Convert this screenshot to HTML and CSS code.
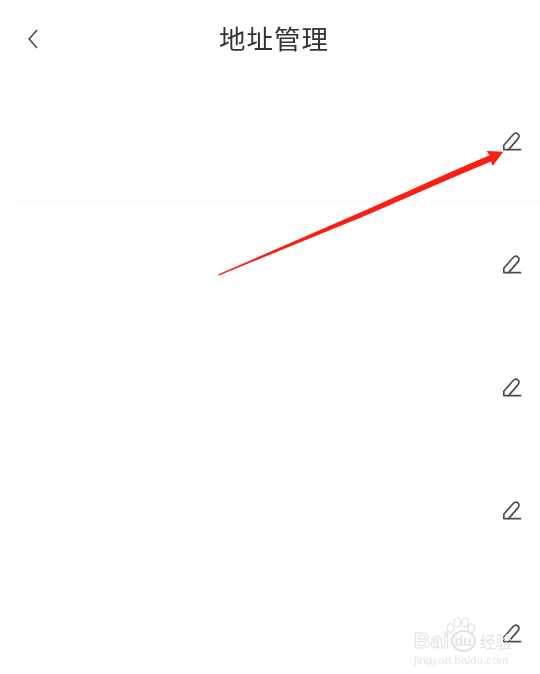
FILE: index.html
```html
<!DOCTYPE html>
<html lang="zh">
<head>
<meta charset="utf-8">
<title>地址管理</title>
<link rel="stylesheet" href="styles.css">
</head>
<body>
<svg class="sprite" width="0" height="0" aria-hidden="true">
  <symbol id="pencil" viewBox="0 0 22 20">
    <path d="M2.8 17.6V13.2L12 2.8c1.5-1.7 3.6-1.9 5-.7 1.4 1.2 1.3 3.2-.1 4.8L7.6 17.6z" fill="none" stroke="currentColor" stroke-width="1.7" stroke-linejoin="round"/>
    <path d="M7.6 17.6H19.6" fill="none" stroke="currentColor" stroke-width="1.7" stroke-linecap="round"/>
  </symbol>
</svg>
<div class="page">
  <header class="topbar">
    <svg class="back" width="12" height="22" viewBox="0 0 12 22" aria-hidden="true"><path d="M10 2 2.2 11 10 20" fill="none" stroke="currentColor" stroke-width="1.6"/></svg>
    <h1 class="title">地址管理</h1>
  </header>
  <ul class="list">
    <li class="row"><svg class="edit" width="22" height="20"><use href="#pencil"/></svg></li>
    <li class="row"><svg class="edit" width="22" height="20"><use href="#pencil"/></svg></li>
    <li class="row"><svg class="edit" width="22" height="20"><use href="#pencil"/></svg></li>
    <li class="row"><svg class="edit" width="22" height="20"><use href="#pencil"/></svg></li>
    <li class="row"><svg class="edit" width="22" height="20"><use href="#pencil"/></svg></li>
  </ul>
  <svg class="arrow" width="540" height="674" viewBox="0 0 540 674" aria-hidden="true">
    <path d="M218 274.5 367 209.5 453 171 489.5 155.2 486.7 151 503.3 151.7 492.7 166 491 161.5 453 177.5 367 215 219 275.5z" fill="#fb1f12"/>
  </svg>
  <div class="watermark">
    <svg class="paw" width="30" height="20" viewBox="0 0 30 20" aria-hidden="true">
      <g fill="#fff" stroke="currentColor" stroke-width="1.4">
        <ellipse cx="4.5" cy="11" rx="3.2" ry="4.4"/>
        <ellipse cx="11.5" cy="5.5" rx="3.2" ry="4.6"/>
        <ellipse cx="19" cy="5.5" rx="3.2" ry="4.6"/>
        <ellipse cx="25.5" cy="11" rx="3.2" ry="4.4"/>
      </g>
    </svg>
    <div class="wm-line"><span class="wm-bai">Bai</span><span class="wm-du">du</span><span class="wm-cn">经验</span></div>
    <div class="wm-url">jingyan.baidu.com</div>
  </div>
</div>
</body>
</html>
```
FILE: styles.css
```css
* { box-sizing: border-box; }
html, body { margin: 0; padding: 0; background: #fff; }
.sprite { position: absolute; }
.page {
  position: relative;
  width: 540px;
  height: 674px;
  overflow: hidden;
  background: #fff;
  border-top: 1px solid #fcfcfc;
}
.topbar {
  display: flex;
  align-items: center;
  justify-content: center;
  position: relative;
  height: 78px;
  padding-bottom: 1px;
  border-bottom: 1px solid #fcfcfc;
}
.back {
  position: absolute;
  left: 27px;
  top: 27px;
  color: #4a4a4a;
}
.title {
  margin: 0;
  font: 400 26.5px/1 "Noto Sans CJK SC", sans-serif;
  letter-spacing: 1px;
  color: #333;
  position: relative;
  top: -1px;
  left: 4px;
  filter: blur(0.4px);
}
.list { list-style: none; margin: 0; padding: 0; }
.row {
  display: flex;
  align-items: center;
  justify-content: flex-end;
  height: 123.2px;
  padding: 2px 17px 0 16px;
  position: relative;
}
.row::after {
  content: "";
  position: absolute;
  left: 16px;
  right: 0;
  bottom: 0;
  height: 2px;
  background: #fcfcfc;
}
.row:last-child::after { display: none; }
.edit { color: #4c4c4c; filter: blur(0.4px); }
.arrow { position: absolute; left: 0; top: -1px; }
.watermark {
  position: absolute;
  left: 414px;
  top: 616px;
  width: 110px;
  color: #e4e4e4;
  font-family: "Liberation Sans", sans-serif;
  filter: blur(0.4px);
}
.paw { position: absolute; left: 32px; top: 0; }
.wm-line {
  display: flex;
  align-items: center;
  margin-top: 12px;
  height: 24px;
}
.wm-bai { font-size: 22px; font-weight: 700; color: #fff; -webkit-text-stroke: 1px #e2e2e2; letter-spacing: 0.5px; }
.wm-du {
  display: inline-flex;
  justify-content: center;
  align-items: center;
  width: 25px;
  height: 22px;
  margin-left: 1px;
  border: 2px solid #e2e2e2;
  border-radius: 50%;
  font-size: 14px;
  font-weight: 700;
}
.wm-cn { font: 400 16px/1 "Noto Sans CJK SC", sans-serif; margin-left: 4px; white-space: nowrap; }
.wm-url { font-size: 11.5px; margin-top: 1px; letter-spacing: 0.1px; white-space: nowrap; }
```
